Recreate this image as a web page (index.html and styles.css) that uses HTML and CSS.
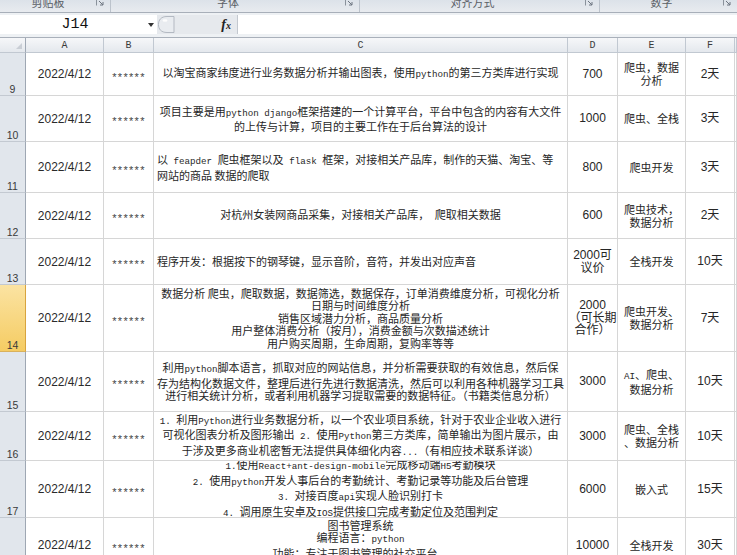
FILE: index.html
```html
<!DOCTYPE html>
<html lang="zh-CN">
<head>
<meta charset="utf-8">
<title>Sheet</title>
<link rel="stylesheet" href="styles.css">
</head>
<body>
<div class="ribbon">
  <div class="grp g1"><span class="lbl">剪贴板</span><svg class="launch" viewBox="0 0 8 8"><path d="M0.5 7.5V0.5H7.5" fill="none" stroke="#8a929c"/><path d="M3 3L7 7M4 7H7V4" fill="none" stroke="#6d7580"/></svg></div>
  <div class="grp g2"><span class="lbl">字体</span><svg class="launch" viewBox="0 0 8 8"><path d="M0.5 7.5V0.5H7.5" fill="none" stroke="#8a929c"/><path d="M3 3L7 7M4 7H7V4" fill="none" stroke="#6d7580"/></svg></div>
  <div class="grp g3"><span class="lbl">对齐方式</span><svg class="launch" viewBox="0 0 8 8"><path d="M0.5 7.5V0.5H7.5" fill="none" stroke="#8a929c"/><path d="M3 3L7 7M4 7H7V4" fill="none" stroke="#6d7580"/></svg></div>
  <div class="grp g4"><span class="lbl">数字</span><svg class="launch" viewBox="0 0 8 8"><path d="M0.5 7.5V0.5H7.5" fill="none" stroke="#8a929c"/><path d="M3 3L7 7M4 7H7V4" fill="none" stroke="#6d7580"/></svg></div>
</div>

<div class="fbar">
  <div class="namebox"><span class="nbtext">J14</span><span class="nbarrow"></span></div>
  <div class="fxarea">
    <svg class="gripsvg" viewBox="0 0 18 19"><path d="M17 1.5H10C4 1.5 1.5 5 1.5 9.5S4 17.5 10 17.5H17Z" fill="#e9ecf0" stroke="#b3b9c2"/><ellipse cx="8" cy="5.5" rx="2.5" ry="1.3" fill="#fdfdfd"/></svg>
    <span class="fx">f<small>x</small></span>
  </div>
  <div class="finput"></div>
</div>

<div class="sheet">
  <div class="row hdr">
    <div class="corner"><span class="tri"></span></div>
    <div>A</div><div>B</div><div>C</div><div>D</div><div>E</div><div>F</div><div></div>
  </div>

  <div class="row r9">
    <div class="rh">9</div>
    <div class="dt">2022/4/12</div>
    <div class="st">******</div>
    <div class="c"><div>以淘宝商家纬度进行业务数据分析并输出图表，使用<span class="m">python</span>的第三方类库进行实现</div></div>
    <div class="n">700</div>
    <div class="e"><div>爬虫，数据</div><div>分析</div></div>
    <div class="n">2天</div>
    <div></div>
  </div>

  <div class="row r10">
    <div class="rh">10</div>
    <div class="dt">2022/4/12</div>
    <div class="st">******</div>
    <div class="c"><div>项目主要是用<span class="m">python django</span>框架搭建的一个计算平台，平台中包含的内容有大文件</div><div>的上传与计算，项目的主要工作在于后台算法的设计</div></div>
    <div class="n">1000</div>
    <div class="e"><div>爬虫、全栈</div></div>
    <div class="n">3天</div>
    <div></div>
  </div>

  <div class="row r11">
    <div class="rh">11</div>
    <div class="dt">2022/4/12</div>
    <div class="st">******</div>
    <div class="c left"><div>以<span class="m"> feapder </span>爬虫框架以及<span class="m"> flask </span>框架，对接相关产品库，制作的天猫、淘宝、等</div><div>网站的商品 数据的爬取</div></div>
    <div class="n">800</div>
    <div class="e"><div>爬虫开发</div></div>
    <div class="n">3天</div>
    <div></div>
  </div>

  <div class="row r12">
    <div class="rh">12</div>
    <div class="dt">2022/4/12</div>
    <div class="st">******</div>
    <div class="c"><div>对杭州女装网商品采集，对接相关产品库，<span class="m"> </span>爬取相关数据</div></div>
    <div class="n">600</div>
    <div class="e"><div>爬虫技术，</div><div>数据分析</div></div>
    <div class="n">2天</div>
    <div></div>
  </div>

  <div class="row r13">
    <div class="rh">13</div>
    <div class="dt">2022/4/12</div>
    <div class="st">******</div>
    <div class="c left"><div>程序开发：根据按下的钢琴键，显示音阶，音符，并发出对应声音</div></div>
    <div class="n"><div>2000可</div><div>议价</div></div>
    <div class="e"><div>全栈开发</div></div>
    <div class="n">10天</div>
    <div></div>
  </div>

  <div class="row r14">
    <div class="rh sel">14</div>
    <div class="dt">2022/4/12</div>
    <div class="st">******</div>
    <div class="c"><div>数据分析 爬虫，爬取数据，数据筛选，数据保存，订单消费维度分析，可视化分析</div><div>日期与时间维度分析</div><div>销售区域潜力分析，商品质量分析</div><div>用户整体消费分析（按月），消费金额与次数描述统计</div><div>用户购买周期，生命周期，复购率等等</div></div>
    <div class="n"><div>2000</div><div>（可长期</div><div>合作）</div></div>
    <div class="e"><div>爬虫开发、</div><div>数据分析</div></div>
    <div class="n">7天</div>
    <div></div>
  </div>

  <div class="row r15">
    <div class="rh">15</div>
    <div class="dt">2022/4/12</div>
    <div class="st">******</div>
    <div class="c"><div>利用<span class="m">python</span>脚本语言，抓取对应的网站信息，并分析需要获取的有效信息，然后保</div><div>存为结构化数据文件，整理后进行先进行数据清洗，然后可以利用各种机器学习工具</div><div>进行相关统计分析，或者利用机器学习提取需要的数据特征。（书籍类信息分析）</div></div>
    <div class="n">3000</div>
    <div class="e"><div><span class="m">AI</span>、爬虫、</div><div>数据分析</div></div>
    <div class="n">10天</div>
    <div></div>
  </div>

  <div class="row r16">
    <div class="rh">16</div>
    <div class="dt">2022/4/12</div>
    <div class="st">******</div>
    <div class="c"><div><span class="m">1.  </span>利用<span class="m">Python</span>进行业务数据分析，以一个农业项目系统，针对于农业企业收入进行</div><div>可视化图表分析及图形输出<span class="m"> 2. </span>使用<span class="m">Python</span>第三方类库，简单输出为图片展示，由</div><div>于涉及更多商业机密暂无法提供具体细化内容<span class="m">...</span>（有相应技术联系详谈）</div></div>
    <div class="n">3000</div>
    <div class="e"><div>爬虫、全栈</div><div>、数据分析</div></div>
    <div class="n">10天</div>
    <div></div>
  </div>

  <div class="row r17">
    <div class="rh">17</div>
    <div class="dt">2022/4/12</div>
    <div class="st">******</div>
    <div class="c"><div><span class="m">1.</span>使用<span class="m">React+ant-design-mobile</span>完成移动端<span class="m">H5</span>考勤模块</div><div><span class="m">2. </span>使用<span class="m">python</span>开发人事后台的考勤统计、考勤记录等功能及后台管理</div><div><span class="m">3. </span>对接百度<span class="m">api</span>实现人脸识别打卡</div><div><span class="m">4. </span>调用原生安卓及<span class="m">IOS</span>提供接口完成考勤定位及范围判定</div></div>
    <div class="n">6000</div>
    <div class="e"><div>嵌入式</div></div>
    <div class="n">15天</div>
    <div></div>
  </div>

  <div class="row r18">
    <div class="rh">18</div>
    <div class="dt">2022/4/12</div>
    <div class="st">******</div>
    <div class="c"><div>图书管理系统</div><div>编程语言：<span class="m">python</span></div><div>功能：专注于图书管理的社交平台。</div><div>&nbsp;</div></div>
    <div class="n">10000</div>
    <div class="e"><div>全栈开发</div></div>
    <div class="n">30天</div>
    <div></div>
  </div>
</div>
</body>
</html>
```

FILE: styles.css
```css
* { box-sizing: border-box; margin: 0; padding: 0; }
html, body { width: 737px; height: 555px; overflow: hidden; background: #fff; }
body { font-family: "Noto Sans CJK SC", sans-serif; color: #262626; }

/* ribbon group labels */
.ribbon {
  display: flex;
  height: 13px;
  background: linear-gradient(#dce2e9, #e8ebef);
  border-bottom: 1px solid #a8afb9;
  overflow: hidden;
}
.grp {
  display: flex;
  align-items: flex-end;
  height: 12px;
  overflow: hidden;
  border-right: 1px solid #bcc3cc;
}
.g1 { width: 111px; }
.g2 { width: 249px; }
.g3 { width: 240px; }
.g4 { flex: 1; border-right: none; }
.lbl {
  flex: 1;
  text-align: center;
  font-size: 11px;
  line-height: 11px;
  color: #5a5f66;
  margin-bottom: 4px;
  white-space: nowrap;
}
.launch { width: 8px; height: 8px; margin: 0 6px 6px 0; flex: none; }

/* formula bar */
.fbar {
  display: flex;
  height: 25px;
  padding: 2px 0 3px;
  background: #eef1f4;
  border-bottom: 1px solid #a9b0ba;
}
.namebox {
  width: 157px;
  height: 19px;
  background: #fff;
  display: flex;
  align-items: center;
}
.nbtext {
  flex: 1;
  text-align: center;
  font-family: "Liberation Mono", monospace;
  font-size: 15px;
  color: #111;
  padding-left: 2px;
}
.nbarrow {
  width: 0; height: 0;
  border-left: 3.5px solid transparent;
  border-right: 3.5px solid transparent;
  border-top: 4px solid #333;
  margin-right: 3px;
}
.fxarea {
  width: 80px;
  height: 19px;
  background: #e6e9ed;
  display: flex;
  align-items: center;
}
.gripsvg { width: 18px; height: 19px; flex: none; }
.fx {
  margin-left: auto;
  margin-right: 6px;
  font-family: "Liberation Serif", serif;
  font-style: italic;
  font-weight: bold;
  font-size: 14px;
  color: #222;
}
.fx small { font-size: 10px; }
.finput {
  flex: 1;
  height: 19px;
  background: #fff;
  border-left: 1px solid #c3c8cf;
}

/* sheet grid */
.row {
  display: grid;
  grid-template-columns: 26px 78px 50px 414px 50px 68px 49px 1fr;
}
.row > div {
  border-right: 1px solid #d6d6d6;
  border-bottom: 1px solid #d6d6d6;
  display: flex;
  flex-direction: column;
  align-items: center;
  justify-content: center;
  text-align: center;
  overflow: hidden;
  white-space: nowrap;
}
.hdr { height: 15px; }
.hdr > div {
  background: linear-gradient(#f6f7f9, #e4e8ed);
  border-color: #c1c8d1;
  font-family: "Liberation Mono", monospace;
  font-size: 10px;
  color: #3a3a3a;
}
.hdr > .corner {
  align-items: flex-end;
  justify-content: flex-end;
  padding: 0 3px 3px 0;
  border-right-color: #9fa8b4;
}
.tri {
  width: 0; height: 0;
  border-left: 6px solid transparent;
  border-bottom: 6px solid #c9ced5;
}

.row > .rh {
  background: #e1e6ec;
  border-right-color: #9ea7b3;
  border-bottom-color: #c3c9d1;
  justify-content: flex-end;
  font-family: "Liberation Sans", sans-serif;
  font-size: 10.5px;
  line-height: 11px;
  color: #3a3a3a;
}
.row > .rh.sel {
  background: linear-gradient(#fbe3a2, #f5cc63);
  border-right-color: #d8a43e;
  border-bottom-color: #d9b15c;
}

.dt { font-family: "Liberation Sans", sans-serif; font-size: 12px; color: #2a2a2a; }
.row > .st {
  font-family: "Liberation Sans", sans-serif;
  font-size: 11px;
  line-height: 11px;
  letter-spacing: 1.3px;
  padding-top: 6px;
  padding-left: 1px;
  color: #444;
}

.c { font-size: 11px; line-height: 12.5px; }
.row > .c.left { align-items: flex-start; text-align: left; padding-left: 3px; }
.m { font-family: "Liberation Mono", monospace; font-size: 9.2px; }

.n { font-family: "Liberation Sans", "Noto Sans CJK SC", sans-serif; font-size: 12px; line-height: 12.6px; }
.e { font-size: 11px; line-height: 13px; }

.r9 { height: 43px; }
.r10 { height: 46px; }
.r11 { height: 51px; }
.r12 { height: 46px; }
.r13 { height: 46px; }
.r14 { height: 67px; }
.r15 { height: 60px; }
.r16 { height: 49px; }
.r17 { height: 57px; }
.r18 { height: 55px; }
```
